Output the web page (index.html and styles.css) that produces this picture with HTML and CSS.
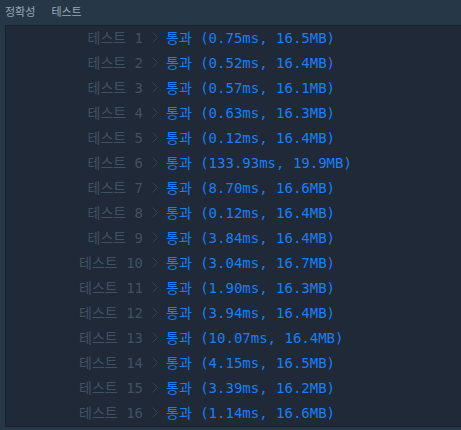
FILE: index.html
```html
<!DOCTYPE html>
<html lang="ko">
<head>
<meta charset="utf-8">
<link rel="stylesheet" href="styles.css">
</head>
<body>
<div class="page">
  <div class="header">
    <span class="tab">정확성</span>
    <span class="tab">테스트</span>
  </div>
  <div class="console">
    <div class="row"><span class="label">테스트 1</span><svg class="chev" width="6" height="11" viewBox="0 0 6 11"><path d="M0.5 0.5 L5.5 5.5 L0.5 10.5" fill="none" stroke="currentColor" stroke-width="1"/></svg><span class="result">통과 (0.75ms, 16.5MB)</span></div>
    <div class="row"><span class="label">테스트 2</span><svg class="chev" width="6" height="11" viewBox="0 0 6 11"><path d="M0.5 0.5 L5.5 5.5 L0.5 10.5" fill="none" stroke="currentColor" stroke-width="1"/></svg><span class="result">통과 (0.52ms, 16.4MB)</span></div>
    <div class="row"><span class="label">테스트 3</span><svg class="chev" width="6" height="11" viewBox="0 0 6 11"><path d="M0.5 0.5 L5.5 5.5 L0.5 10.5" fill="none" stroke="currentColor" stroke-width="1"/></svg><span class="result">통과 (0.57ms, 16.1MB)</span></div>
    <div class="row"><span class="label">테스트 4</span><svg class="chev" width="6" height="11" viewBox="0 0 6 11"><path d="M0.5 0.5 L5.5 5.5 L0.5 10.5" fill="none" stroke="currentColor" stroke-width="1"/></svg><span class="result">통과 (0.63ms, 16.3MB)</span></div>
    <div class="row"><span class="label">테스트 5</span><svg class="chev" width="6" height="11" viewBox="0 0 6 11"><path d="M0.5 0.5 L5.5 5.5 L0.5 10.5" fill="none" stroke="currentColor" stroke-width="1"/></svg><span class="result">통과 (0.12ms, 16.4MB)</span></div>
    <div class="row"><span class="label">테스트 6</span><svg class="chev" width="6" height="11" viewBox="0 0 6 11"><path d="M0.5 0.5 L5.5 5.5 L0.5 10.5" fill="none" stroke="currentColor" stroke-width="1"/></svg><span class="result">통과 (133.93ms, 19.9MB)</span></div>
    <div class="row"><span class="label">테스트 7</span><svg class="chev" width="6" height="11" viewBox="0 0 6 11"><path d="M0.5 0.5 L5.5 5.5 L0.5 10.5" fill="none" stroke="currentColor" stroke-width="1"/></svg><span class="result">통과 (8.70ms, 16.6MB)</span></div>
    <div class="row"><span class="label">테스트 8</span><svg class="chev" width="6" height="11" viewBox="0 0 6 11"><path d="M0.5 0.5 L5.5 5.5 L0.5 10.5" fill="none" stroke="currentColor" stroke-width="1"/></svg><span class="result">통과 (0.12ms, 16.4MB)</span></div>
    <div class="row"><span class="label">테스트 9</span><svg class="chev" width="6" height="11" viewBox="0 0 6 11"><path d="M0.5 0.5 L5.5 5.5 L0.5 10.5" fill="none" stroke="currentColor" stroke-width="1"/></svg><span class="result">통과 (3.84ms, 16.4MB)</span></div>
    <div class="row"><span class="label">테스트 10</span><svg class="chev" width="6" height="11" viewBox="0 0 6 11"><path d="M0.5 0.5 L5.5 5.5 L0.5 10.5" fill="none" stroke="currentColor" stroke-width="1"/></svg><span class="result">통과 (3.04ms, 16.7MB)</span></div>
    <div class="row"><span class="label">테스트 11</span><svg class="chev" width="6" height="11" viewBox="0 0 6 11"><path d="M0.5 0.5 L5.5 5.5 L0.5 10.5" fill="none" stroke="currentColor" stroke-width="1"/></svg><span class="result">통과 (1.90ms, 16.3MB)</span></div>
    <div class="row"><span class="label">테스트 12</span><svg class="chev" width="6" height="11" viewBox="0 0 6 11"><path d="M0.5 0.5 L5.5 5.5 L0.5 10.5" fill="none" stroke="currentColor" stroke-width="1"/></svg><span class="result">통과 (3.94ms, 16.4MB)</span></div>
    <div class="row"><span class="label">테스트 13</span><svg class="chev" width="6" height="11" viewBox="0 0 6 11"><path d="M0.5 0.5 L5.5 5.5 L0.5 10.5" fill="none" stroke="currentColor" stroke-width="1"/></svg><span class="result">통과 (10.07ms, 16.4MB)</span></div>
    <div class="row"><span class="label">테스트 14</span><svg class="chev" width="6" height="11" viewBox="0 0 6 11"><path d="M0.5 0.5 L5.5 5.5 L0.5 10.5" fill="none" stroke="currentColor" stroke-width="1"/></svg><span class="result">통과 (4.15ms, 16.5MB)</span></div>
    <div class="row"><span class="label">테스트 15</span><svg class="chev" width="6" height="11" viewBox="0 0 6 11"><path d="M0.5 0.5 L5.5 5.5 L0.5 10.5" fill="none" stroke="currentColor" stroke-width="1"/></svg><span class="result">통과 (3.39ms, 16.2MB)</span></div>
    <div class="row"><span class="label">테스트 16</span><svg class="chev" width="6" height="11" viewBox="0 0 6 11"><path d="M0.5 0.5 L5.5 5.5 L0.5 10.5" fill="none" stroke="currentColor" stroke-width="1"/></svg><span class="result">통과 (1.14ms, 16.6MB)</span></div>
  </div>
</div>
</body>
</html>
```

FILE: styles.css
```css
html, body {
  margin: 0;
  padding: 0;
  background: #263747;
  overflow: hidden;
}
.page {
  width: 461px;
  height: 430px;
  overflow: hidden;
}
.header {
  height: 25px;
  display: flex;
  align-items: center;
  gap: 16px;
  padding-left: 5px;
  font-family: "Noto Sans CJK KR", "Noto Sans", sans-serif;
  font-size: 11px;
  color: #9aa8b6;
  box-sizing: border-box;
  padding-bottom: 4px;
}
.console {
  margin-left: 5px;
  width: 470px;
  background: #1f2937;
  border: 1px solid #18212c;
  box-sizing: border-box;
  font-family: "DejaVu Sans Mono", "Noto Sans CJK KR", monospace;
  font-size: 14px;
}
.row {
  height: 25px;
  box-sizing: border-box;
  padding-bottom: 3px;
  display: flex;
  align-items: center;
}
.label {
  width: 137px;
  text-align: right;
  color: #415164;
  white-space: pre;
}
.chev {
  color: #334150;
  margin-left: 9px;
  margin-top: 1px;
  flex: none;
}
.result {
  margin-left: 8px;
  color: #1a7ff6;
  white-space: pre;
}
```
